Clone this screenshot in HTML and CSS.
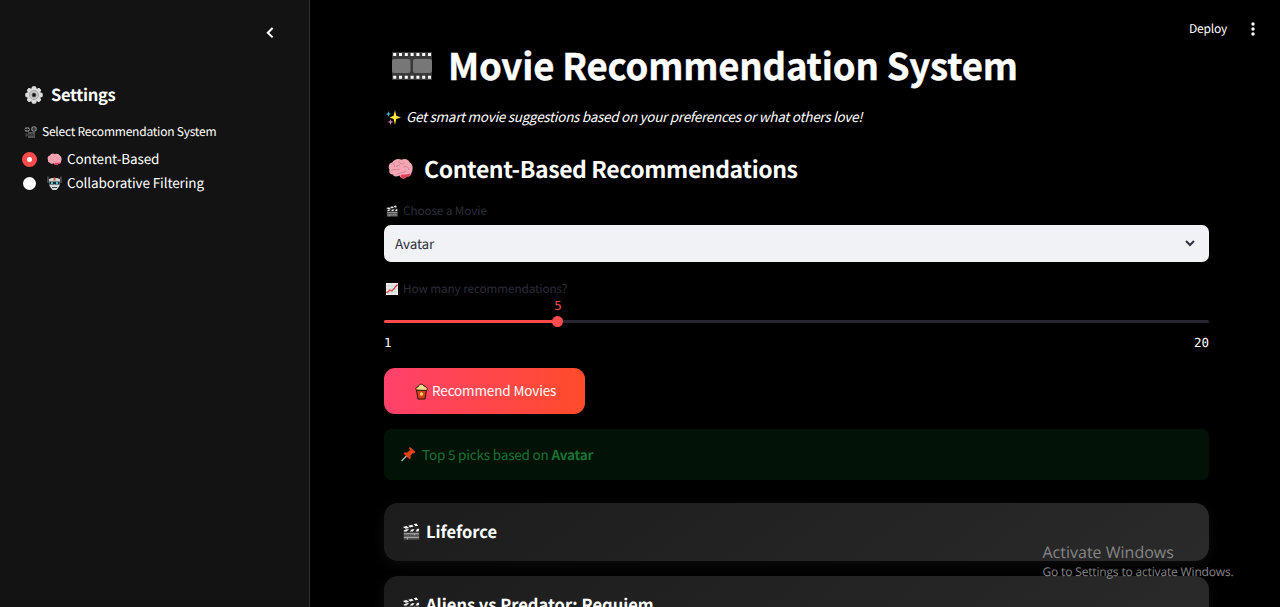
FILE: index.html
```html
<!DOCTYPE html>
<html lang="en">
<head>
<meta charset="utf-8">
<title>Movie Recommendation System</title>
<link rel="stylesheet" href="styles.css">
</head>
<body>
<svg class="defs" width="0" height="0" aria-hidden="true">
  <symbol id="brain" viewBox="0 0 28 24">
    <path fill="#f4a6b5" d="M2 13C0 9 2 5 5 5C7 1 12 0 15 2C19 0 23 2 24 5C28 7 28 13 26 16C26 19 23 21 21 20C19 24 13 22 13 19C9 21 6 20 6 18C3 18 1 16 2 13Z"/>
    <path fill="#e2405a" d="M14 19C16 17 20 19 25 17C25 20 22 21 21 20C19 24 14 23 14 19Z"/>
    <path fill="none" stroke="#d98296" stroke-width="1.100" d="M5 6C7 6 8 8 7 10M4 14C7 11 10 14 13 12M12 3C12 6 15 7 18 6M17 10C20 8 23 10 23 13M10 18C12 15 17 17 20 14M13 8C11 8 10 9 10 10"/>
  </symbol>
  <symbol id="clapper" viewBox="0 0 20 20">
    <path fill="#222" d="M0 4L17 0L19 5V9H20V20H1V9Z"/>
    <path fill="#f5f5f5" d="M1 5L5 4L8 6L4 7ZM7 3.500L11 2.500L13 4.500L9 5.500ZM13 2L16 1L18 3.500L15 4.300ZM2 9L5 7.500H8L5 10H2ZM8.500 10L11 7.500H14L12 10ZM15 10L17 7H19V9L18 10Z"/>
    <path fill="#555" d="M2 11H19V19H2Z"/>
    <path stroke="#bbb" stroke-width="1" d="M2 12.500H19M2 16.500H19M6 16.500V19M14 12.500V14"/>
  </symbol>
</svg>
<div class="app">
  <aside class="sidebar">
    <div class="collapse">
      <svg width="8" height="12" viewBox="0 0 8 12"><path d="M6.600 1L1.800 5.700L6.600 10.400" fill="none" stroke="#fff" stroke-width="2"/></svg>
    </div>
    <h2 class="settings">
      <svg width="18" height="18" viewBox="0 0 18 18"><path fill="#dedede" stroke="#dedede" stroke-linejoin="round" d="M7.500 .8H10.500L11.500 3.500L14 2.300L15.800 4L14.500 6.500L17.200 7.500V10.500L14.500 11.500L15.800 14L14 15.700L11.500 14.500L10.500 17.200H7.500L6.500 14.500L4 15.700L2.200 14L3.500 11.500L.8 10.500V7.500L3.500 6.500L2.200 4L4 2.300L6.500 3.500Z"/><circle cx="9" cy="9" r="4.600" fill="#c9c9c9" stroke="#999" stroke-width=".8"/><circle cx="9" cy="9" r="2" fill="#111" stroke="#555" stroke-width=".8"/></svg>
      <span>Settings</span>
    </h2>
    <div class="side-label">
      <svg width="14" height="13" viewBox="0 0 14 13"><path fill="#505050" d="M4 6H11V12H4Z"/><path fill="#404040" d="M1.500 7L4 8V10L1.500 11Z"/><circle cx="3.200" cy="3.500" r="2.500" fill="#858585"/><circle cx="10" cy="3" r="2.800" fill="#858585"/><path stroke="#222" d="M1 3.500H5M3.200 1.500V5.500M8 3H12M10 1V5M4 9H10"/></svg>
      <span>Select Recommendation System</span>
    </div>
    <div class="option">
      <i class="radio checked"></i>
      <svg class="opt-icon" width="15" height="13"><use href="#brain"/></svg>
      <span class="t-content">Content-Based</span>
    </div>
    <div class="option">
      <i class="radio"></i>
      <svg class="opt-icon" width="15" height="15" viewBox="0 0 15 15"><path stroke="#777" d="M1 .5V7M14 .5V7"/><path fill="#d5d9da" d="M2 3L5 2H10L13 3L12.500 10L9.500 14H5.500L2.500 10Z"/><path fill="#17272c" d="M2.500 5.500H12.500V8.500H2.500Z"/><path fill="#df4b3d" d="M6.500 1.500H8.500V4.500H6.500Z"/><path fill="#47c6d3" d="M4 6H6V8H4ZM9 6H11V8H9Z"/><path stroke="#444" d="M5 11.500H10"/></svg>
      <span class="t-collab">Collaborative Filtering</span>
    </div>
  </aside>
  <main class="main">
    <header class="toolbar">
      <span>Deploy</span>
      <svg width="4" height="14" viewBox="0 0 4 14" fill="#fff"><circle cx="2" cy="2" r="1.700"/><circle cx="2" cy="7" r="1.700"/><circle cx="2" cy="12" r="1.700"/></svg>
    </header>
    <h1 class="title">
      <svg width="40" height="28" viewBox="0 0 40 28"><path fill="#393939" d="M0 0H40V28H0Z"/><rect y="7" width="18.500" height="14" rx="2" fill="#777"/><rect x="21" y="7" width="19" height="14" rx="2" fill="#777"/><path stroke="#fff" stroke-width="3" stroke-dasharray="3 2.800" d="M1.200 2.500H39M1.200 25.300H39"/></svg>
      <span>Movie Recommendation System</span>
    </h1>
    <p class="tagline">
      <svg width="15" height="15" viewBox="0 0 15 15"><path fill="#ffe83b" d="M9 0L10.200 5.800L15 7.500L10.200 9L9 15L7.600 9L3.500 7.500L7.600 5.800Z"/><path fill="#3fb5d0" d="M2.500 1L3.200 3.300L5 4L3.200 4.700L2.500 7L1.800 4.700L0 4L1.800 3.300Z"/><path fill="#d978b5" d="M4.500 9L5.300 11.200L7.500 12L5.300 12.800L4.500 15L3.700 12.800L1.500 12L3.700 11.200Z"/></svg>
      <span>Get smart movie suggestions based on your preferences or what others love!</span>
    </p>
    <h2 class="subtitle">
      <svg width="27" height="22"><use href="#brain"/></svg>
      <span>Content-Based Recommendations</span>
    </h2>
    <div class="label">
      <svg width="12" height="12"><use href="#clapper"/></svg>
      <span class="t-choose">Choose a Movie</span>
    </div>
    <div class="select">
      <span>Avatar</span>
      <svg width="10" height="7" viewBox="0 0 10 7"><path d="M1 1L5 5L9 1" fill="none" stroke="#31333f" stroke-width="2"/></svg>
    </div>
    <div class="label label-count">
      <svg width="12" height="12" viewBox="0 0 12 12"><path fill="#f1f1ee" d="M0 0H12V12H0Z"/><path stroke="#bcc6cd" stroke-width=".6" d="M3 0V12M6 0V12M9 0V12M0 3H12M0 6H12M0 9H12"/><path fill="none" stroke="#d9453d" stroke-width="1.300" d="M.5 10L4 7L6 8L11.500 1.500"/></svg>
      <span class="t-many">How many recommendations?</span>
    </div>
    <div class="slider">
      <div class="value"><span>5</span></div>
      <div class="track"><div class="fill"><i class="thumb"></i></div></div>
      <div class="bounds"><span>1</span><span>20</span></div>
    </div>
    <button class="recommend">
      <svg width="13" height="17" viewBox="0 0 13 17"><path fill="#d84019" stroke="#2a1608" d="M1.500 7H11.500L10 16H3Z"/><path fill="#f7d98b" stroke="#2a1608" d="M1 7C0 5 2 4 3 4C3 2 5 2 6 1C8 1 8 3 10 3.500C12 4 13 6 11.500 7.500Z"/><circle cx="6.500" cy="11" r="1.700" fill="#ffd36a"/></svg>
      <span>Recommend Movies</span>
    </button>
    <div class="alert">
      <svg width="15" height="15" viewBox="0 0 15 15"><path stroke="#b8bec0" stroke-width="1.300" d="M.5 14L6 8.500"/><path fill="#e64219" d="M9 0L14.500 5L13 6.500L12 6L9.500 8.500L9.800 11L8.500 12.200L2.500 6.500L4 5.200L6.300 5.500L9 3L8 1Z"/></svg>
      <span class="t-top">Top 5 picks based on <b>Avatar</b></span>
    </div>
    <div class="card">
      <svg width="18" height="19"><use href="#clapper"/></svg>
      <span class="t-life">Lifeforce</span>
    </div>
    <div class="card">
      <svg width="18" height="19"><use href="#clapper"/></svg>
      <span class="t-aliens">Aliens vs Predator: Requiem</span>
    </div>
  </main>
  <div class="watermark">
    <div class="wm-title">Activate Windows</div>
    <div class="wm-text">Go to Settings to activate Windows.</div>
  </div>
</div>
</body>
</html>
```
FILE: styles.css
```css
* { box-sizing: border-box; }
body { margin: 0; background: #000; color: #fff; font-family: "Noto Sans CJK SC", "Open Sans", sans-serif; text-rendering: geometricPrecision; }
h1, h2, p { margin: 0; }
svg { display: block; flex: none; }
span { white-space: nowrap; }
.defs { position: absolute; }
.app { position: relative; display: flex; width: 1280px; height: 607px; overflow: hidden; }

.sidebar { width: 310px; flex: none; background: #131313; border-right: 1px solid #303030; padding-left: 23px; }
.collapse { height: 81px; padding: 27px 35px 0 0; display: flex; justify-content: flex-end; }
.settings { display: flex; align-items: center; gap: 8px; height: 28px; padding-left: 2px; font-size: 16.500px; line-height: 28px; font-weight: 600; letter-spacing: -.3px; }
.settings span { padding-bottom: 2px; }
.side-label { display: flex; align-items: center; gap: 4px; height: 22px; margin: 12px 0 4px 1px; font-size: 12px; line-height: 22px; letter-spacing: -.22px; }
.option { display: flex; align-items: center; height: 24px; font-size: 13.500px; line-height: 24px; letter-spacing: -.1px; }
.option span { padding-bottom: 2px; }
.radio { width: 13px; height: 13px; border-radius: 50%; background: #fff; }
.radio.checked { width: 15px; height: 15px; margin: 0 -1px; border: 5px solid #ff4b4b; }
.opt-icon { margin: 0 5px 0 11px; width: 15px; }

.main { flex: 1; padding: 0 71px 0 74px; position: relative; }
.toolbar { position: absolute; top: 18px; right: 25px; display: flex; align-items: center; gap: 24px; font-size: 12px; line-height: 22px; letter-spacing: -.2px; }
.title span, .tagline span, .subtitle span, .select span, .recommend span, .alert span, .card span { padding-bottom: 2px; }
.title { display: flex; align-items: center; gap: 16px; height: 54px; margin-top: 39px; padding-left: 8px; font-size: 36.500px; line-height: 54px; font-weight: 700; letter-spacing: -.17px; -webkit-text-stroke: .4px #fff; }
.tagline { display: flex; align-items: center; gap: 5px; height: 24px; margin-top: 12px; padding-left: 2px; font-size: 13.500px; line-height: 24px; font-style: italic; letter-spacing: -.29px; }
.subtitle { display: flex; align-items: center; gap: 10px; height: 36px; margin-top: 22px; padding-left: 3px; font-size: 23px; line-height: 36px; font-weight: 600; letter-spacing: -.4px; }
.label { display: flex; align-items: center; gap: 5px; height: 20px; margin-top: 14px; padding-left: 2px; font-size: 11.700px; line-height: 20px; color: #2b2d38; letter-spacing: -.07px; }
.label span { padding-bottom: 1px; }
.select { display: flex; align-items: center; justify-content: space-between; height: 37px; margin-top: 4px; padding: 0 14px 0 11px; border-radius: 7px; background: #f0f2f6; color: #31333f; font-size: 13.500px; letter-spacing: -.1px; }
.label-count { margin-top: 17px; }
.slider { height: 69px; }
.value { height: 21px; width: 348px; text-align: center; color: #ff4b4b; font: 12.500px/14px "DejaVu Sans Mono", monospace; }
.track { height: 3px; border-radius: 2px; background: #262730; }
.fill { width: 174px; height: 3px; border-radius: 2px; background: #ff4b4b; display: flex; align-items: center; justify-content: flex-end; }
.thumb { width: 11px; height: 11px; margin-right: -5px; border-radius: 50%; background: #ff4b4b; flex: none; }
.bounds { display: flex; justify-content: space-between; margin-top: 12px; font: 12.500px/16px "DejaVu Sans Mono", monospace; }
.recommend { display: flex; align-items: center; gap: 4px; width: 201px; height: 46px; padding: 0 0 0 31px; border: 0; border-radius: 11px; background: linear-gradient(90deg, #ff416c, #ff4b2b); color: #fff; font-family: inherit; font-size: 13.500px; letter-spacing: -.13px; }
.alert { display: flex; align-items: center; gap: 6px; height: 51px; margin-top: 15px; padding-left: 17px; border-radius: 7px; background: #021207; color: #177233; font-size: 13.500px; letter-spacing: -.18px; }
.card { display: flex; align-items: center; gap: 6px; height: 58.500px; margin-top: 15px; padding-left: 18px; border-radius: 14px; background: linear-gradient(145deg, #1c1c1c, #2a2a2a); box-shadow: 0 4px 14px rgba(255, 255, 255, .05); font-size: 16.500px; font-weight: 700; }
.alert + .card { margin-top: 22.500px; }

.watermark { position: absolute; left: 1042.500px; top: 541px; color: #858585; font-family: "Open Sans", sans-serif; white-space: nowrap; }
.wm-title { font-size: 16px; line-height: 22px; }
.wm-text { font-size: 12px; line-height: 18px; letter-spacing: -.16px; }
```
